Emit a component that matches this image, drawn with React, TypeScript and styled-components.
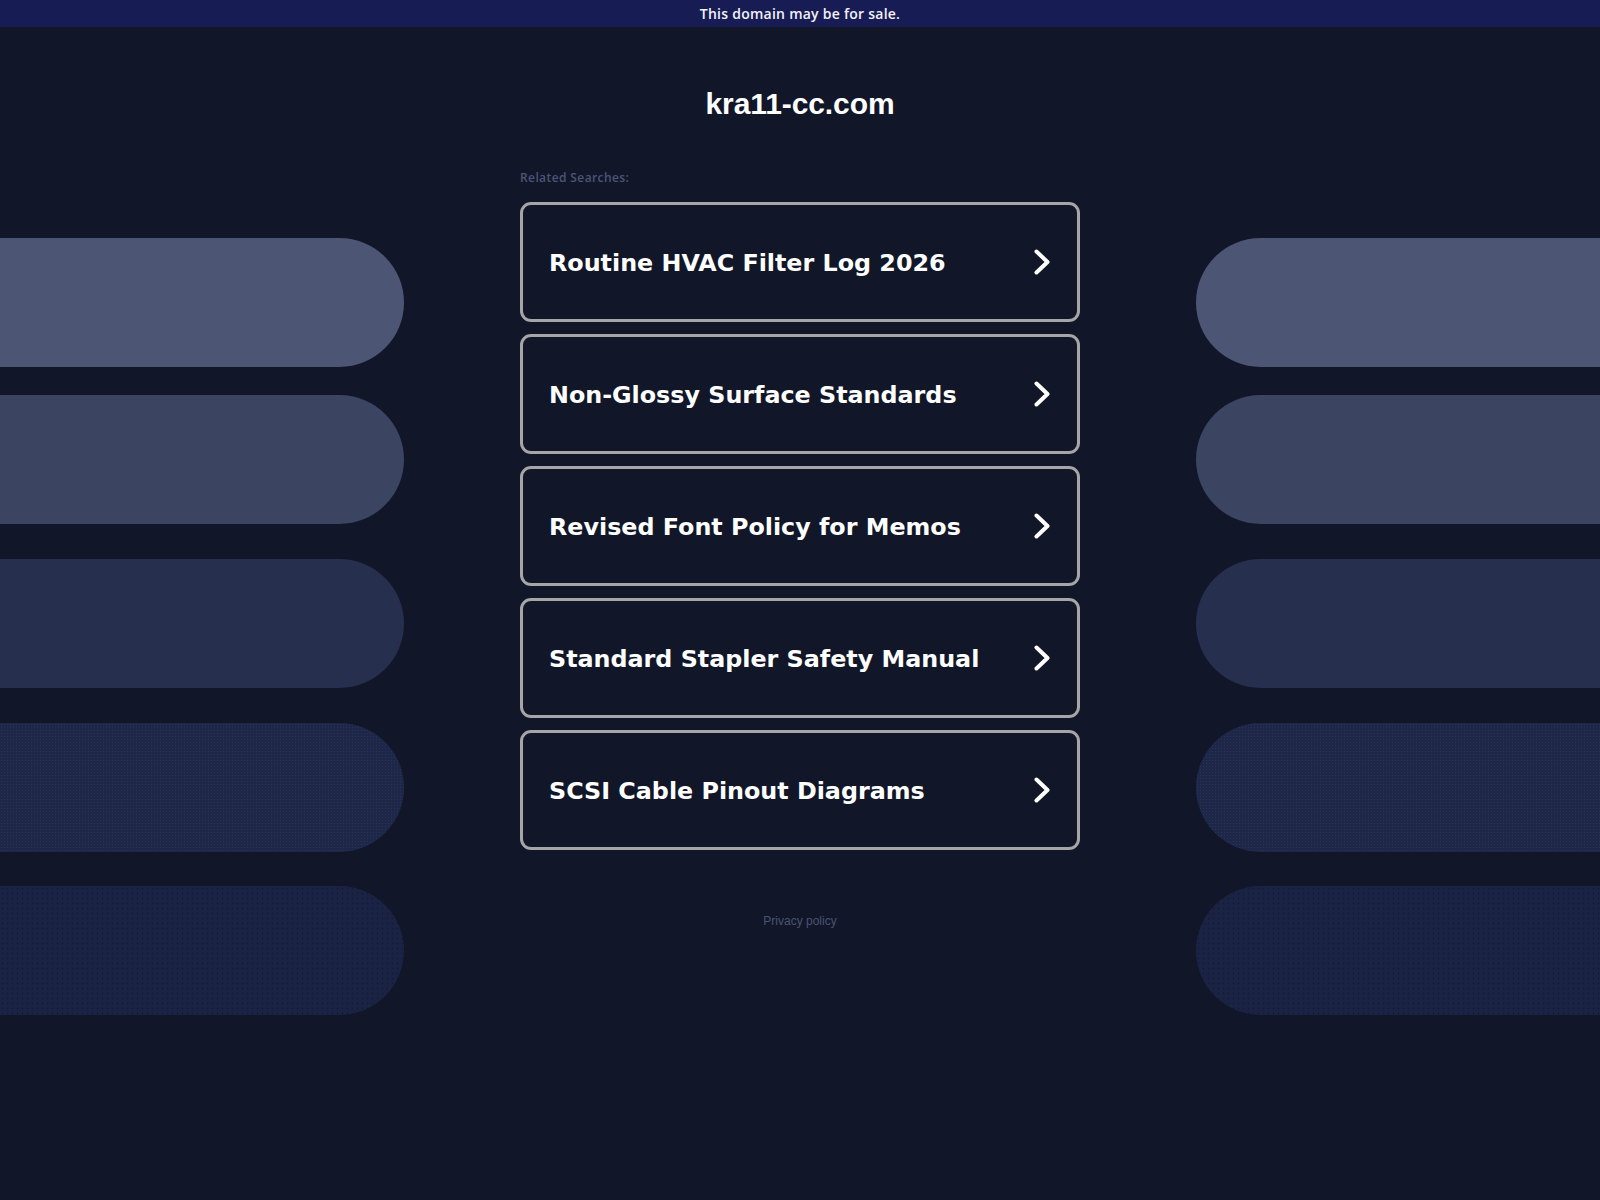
import React from "react";
import styled, { createGlobalStyle, css } from "styled-components";

const GlobalStyle = createGlobalStyle`
  html, body {
    margin: 0;
    padding: 0;
    background: #111729;
  }
  * { box-sizing: border-box; }
`;

const Page = styled.div`
  min-height: 1200px;
  background: #111729;
  display: flex;
  flex-direction: column;
`;

const TopBar = styled.div`
  height: 27px;
  background: #181c54;
  color: #f2f2f8;
  font-family: "Open Sans", "Noto Sans", sans-serif;
  font-weight: 600;
  font-size: 14px;
  display: flex;
  align-items: center;
  justify-content: center;
  letter-spacing: 0.25px;
`;

const Main = styled.div`
  display: grid;
  grid-template-columns: 404px 1fr 404px;
  flex: 1;
`;

const SideColumn = styled.div`
  display: flex;
  flex-direction: column;
  padding-top: 211px;
`;

type PillProps = { $side: "left" | "right"; $tone: number; $gap: number };

const tones = ["#4d5574", "#3b4461", "#262f4d", "#1e2747", "#1b2344"];

const Pill = styled.div<PillProps>`
  height: 129px;
  margin-top: ${(p) => p.$gap}px;
  background-color: ${(p) => tones[p.$tone]};
  border-radius: ${(p) => (p.$side === "left" ? "0 65px 65px 0" : "65px 0 0 65px")};
  ${(p) =>
    p.$tone === 3 &&
    css`
      background-image: radial-gradient(rgba(60, 72, 120, 0.35) 0.8px, transparent 1px);
      background-size: 3px 3px;
    `}
  ${(p) =>
    p.$tone === 4 &&
    css`
      background-image: radial-gradient(rgba(12, 18, 40, 0.55) 0.8px, transparent 1.1px);
      background-size: 5px 5px;
    `}
`;

const Center = styled.div`
  display: flex;
  flex-direction: column;
  align-items: center;
  padding-top: 59px;
`;

const Title = styled.h1`
  margin: 0;
  font-family: "Liberation Sans", Arial, sans-serif;
  font-weight: 700;
  font-size: 30px;
  line-height: 36px;
  color: #ffffff;
  letter-spacing: -0.1px;
`;

const Content = styled.div`
  width: 560px;
  display: flex;
  flex-direction: column;
`;

const Label = styled.div`
  margin-top: 48px;
  font-family: "Open Sans", "Noto Sans", sans-serif;
  font-size: 12px;
  line-height: 16px;
  font-weight: 600;
  letter-spacing: 0.4px;
  color: #4c5576;
`;

const CardList = styled.div`
  margin-top: 16px;
  display: flex;
  flex-direction: column;
  gap: 12px;
`;

const Card = styled.a`
  height: 120px;
  border: 3px solid #a6a6a8;
  border-radius: 11px;
  display: flex;
  align-items: center;
  justify-content: space-between;
  padding: 0 27px 0 26px;
  text-decoration: none;
  color: #ffffff;
  background: #111729;
  cursor: pointer;
`;

const CardText = styled.span`
  font-family: "DejaVu Sans", Verdana, sans-serif;
  font-weight: 700;
  font-size: 23.8px;
  line-height: 28px;
  color: #ffffff;
  padding-top: 1px;
`;

const Footer = styled.a`
  margin-top: 64px;
  align-self: center;
  font-family: "Liberation Sans", Arial, sans-serif;
  font-size: 12px;
  line-height: 14px;
  color: #4a5273;
  text-decoration: none;
`;

const Chevron = () => (
  <svg width="16" height="26" viewBox="0 0 16 26" aria-hidden="true">
    <path
      d="M2.5 2.5 L13.5 13 L2.5 23.5"
      fill="none"
      stroke="#ffffff"
      strokeWidth="4"
      strokeLinecap="round"
      strokeLinejoin="round"
    />
  </svg>
);

const searches = [
  "Routine HVAC Filter Log 2026",
  "Non-Glossy Surface Standards",
  "Revised Font Policy for Memos",
  "Standard Stapler Safety Manual",
  "SCSI Cable Pinout Diagrams",
];

const gaps = [0, 28, 35, 35, 34];

export default function App() {
  return (
    <>
      <GlobalStyle />
      <Page>
        <TopBar>This domain may be for sale.</TopBar>
        <Main>
          <SideColumn>
            {gaps.map((g, i) => (
              <Pill key={i} $side="left" $tone={i} $gap={g} />
            ))}
          </SideColumn>
          <Center>
            <Title>kra11-cc.com</Title>
            <Content>
              <Label>Related Searches:</Label>
              <CardList>
                {searches.map((s) => (
                  <Card key={s}>
                    <CardText>{s}</CardText>
                    <Chevron />
                  </Card>
                ))}
              </CardList>
              <Footer>Privacy policy</Footer>
            </Content>
          </Center>
          <SideColumn>
            {gaps.map((g, i) => (
              <Pill key={i} $side="right" $tone={i} $gap={g} />
            ))}
          </SideColumn>
        </Main>
      </Page>
    </>
  );
}
